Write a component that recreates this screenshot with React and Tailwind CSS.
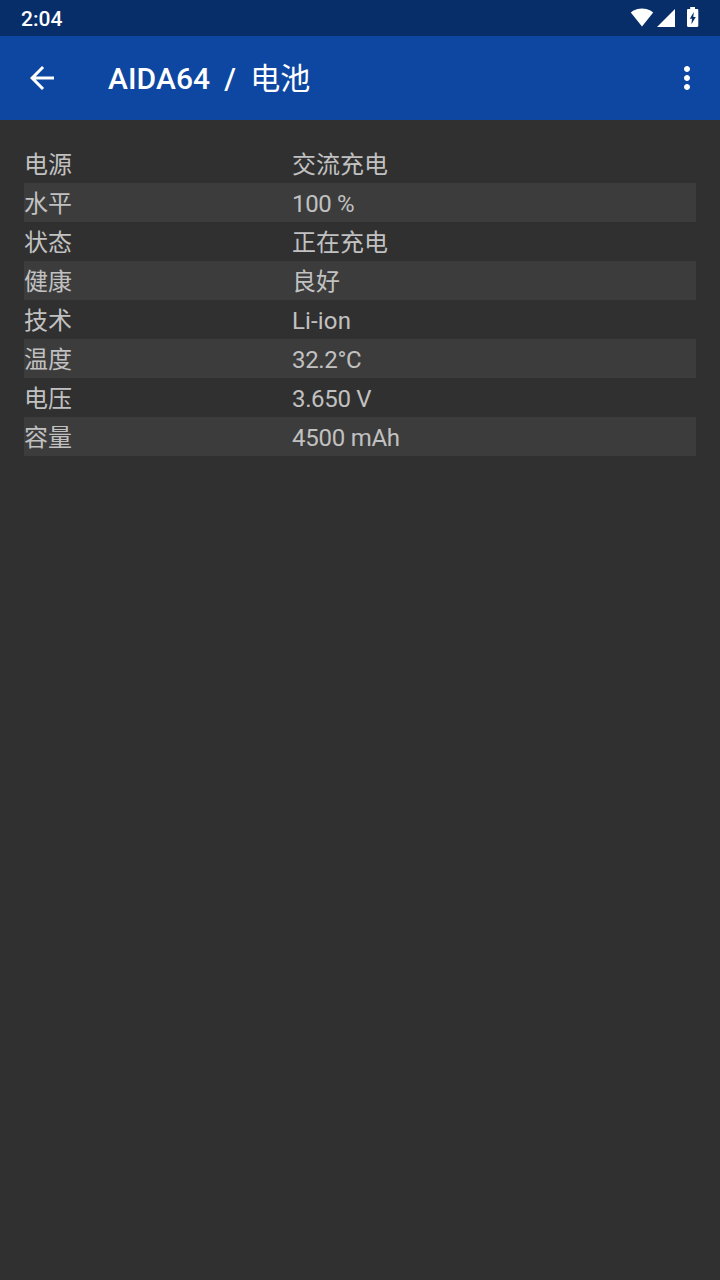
import React from "react";

const batteryInfo = [
  { label: "电源", value: "交流充电" },
  { label: "水平", value: "100 %", tracking: "tracking-[-0.35px]" },
  { label: "状态", value: "正在充电" },
  { label: "健康", value: "良好" },
  { label: "技术", value: "Li-ion", tracking: "tracking-[0.15px]" },
  { label: "温度", value: "32.2°C", tracking: "tracking-[-0.35px]" },
  { label: "电压", value: "3.650 V", tracking: "tracking-[-0.35px]" },
  { label: "容量", value: "4500 mAh", tracking: "tracking-[-0.25px]" },
];

const WifiIcon = () => (
  <svg className="w-[24px] h-[20px] mb-0.5" viewBox="0 0 24 20" fill="currentColor">
    <path d="M12 19.5 0.8 5.4C1.3 5 5.3 1.4 12 1.4s10.7 3.6 11.2 4L12 19.5z" />
  </svg>
);

const SignalIcon = () => (
  <svg className="w-[18px] h-[18px]" viewBox="0 0 18 18" fill="currentColor">
    <path d="M0 18h18V0z" />
  </svg>
);

const BatteryIcon = () => (
  <svg className="w-[12px] h-[20px] mb-0.5" viewBox="0 0 12 20" fill="currentColor">
    <path
      fillRule="evenodd"
      d="M10.1 2H8V0H3.2v2H1.2C.5 2 0 2.5 0 3.2v15.6C0 19.5.5 20 1.2 20h8.9c.7 0 1.2-.5 1.2-1.2V3.2c0-.7-.5-1.2-1.2-1.2zM4.4 17.2l.6-5.4H2.8L6.8 5l-.5 4.9h2.5z"
    />
  </svg>
);

const StatusBar = () => (
  <div className="flex items-center h-9 pl-[21px] pr-[21px] bg-[#082e6a] text-white">
    <span className="pt-px text-[21px] leading-9 font-medium">2:04</span>
    <div className="flex items-center ml-auto h-9">
      <WifiIcon />
      <div className="ml-[3px] mr-3">
        <SignalIcon />
      </div>
      <BatteryIcon />
    </div>
  </div>
);

const AppBar = () => (
  <div className="flex items-center h-[84px] pl-6 pr-[15px] bg-[#0d47a1] text-white">
    <button type="button" aria-label="Back">
      <svg className="w-9 h-9" viewBox="0 0 24 24" fill="currentColor">
        <path d="M20 11H7.83l5.59-5.59L12 4l-8 8 8 8 1.41-1.41L7.83 13H20v-2z" />
      </svg>
    </button>
    <h1 className="flex ml-12 pt-0.5 text-[30px] leading-9 font-medium whitespace-pre">
      <span className="tracking-[0.1px]">AIDA64</span>
      <span className="tracking-[-0.5px]">{"  /"}</span>
      <span>{"  "}</span>
      <span className="font-normal">电池</span>
    </h1>
    <button type="button" aria-label="More" className="ml-auto">
      <svg className="w-9 h-9" viewBox="0 0 24 24" fill="currentColor">
        <path d="M12 8c1.1 0 2-.9 2-2s-.9-2-2-2-2 .9-2 2 .9 2 2 2zm0 2c-1.1 0-2 .9-2 2s.9 2 2 2 2-.9 2-2-.9-2-2-2zm0 6c-1.1 0-2 .9-2 2s.9 2 2 2 2-.9 2-2-.9-2-2-2z" />
      </svg>
    </button>
  </div>
);

export default function App() {
  return (
    <div className="flex flex-col h-screen bg-[#303030] font-['Roboto','Noto_Sans_CJK_SC',sans-serif]">
      <StatusBar />
      <AppBar />
      <div className="px-6 pt-6">
        {batteryInfo.map((item) => (
          <div
            key={item.label}
            className="flex h-[39px] text-2xl leading-[43px] text-[#c1c1c1] even:bg-[#3c3c3c]"
          >
            <div className="w-[268px]">{item.label}</div>
            <div className={item.tracking}>{item.value}</div>
          </div>
        ))}
      </div>
    </div>
  );
}
